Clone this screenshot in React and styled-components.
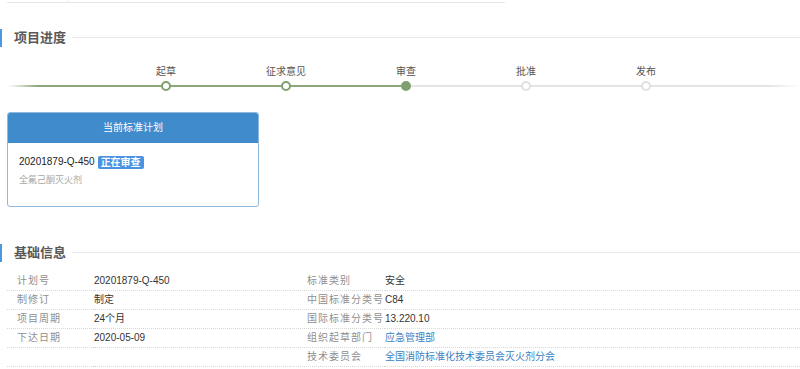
import React from 'react';
import styled, { createGlobalStyle } from 'styled-components';

const GlobalStyle = createGlobalStyle`
  body {
    margin: 0;
    background: #fff;
    font-family: "Liberation Sans", "Noto Sans CJK SC", sans-serif;
  }
`;

const steps = [
  { name: '起草', state: 'done' },
  { name: '征求意见', state: 'done' },
  { name: '审查', state: 'current' },
  { name: '批准', state: 'todo' },
  { name: '发布', state: 'todo' },
];

const leftRows = [
  ['计划号', '20201879-Q-450'],
  ['制修订', '制定'],
  ['项目周期', '24个月'],
  ['下达日期', '2020-05-09'],
  ['', ''],
];

const rightRows = [
  ['标准类别', '安全', false],
  ['中国标准分类号', 'C84', false],
  ['国际标准分类号', '13.220.10', false],
  ['组织起草部门', '应急管理部', true],
  ['技术委员会', '全国消防标准化技术委员会灭火剂分会', true],
];

const App = () => {
  return (
    <Page>
      <GlobalStyle />
      <TopRule>
        <TopCell $w={60} />
        <TopCell />
      </TopRule>

      <SectionHead $top={26}>
        <SectionTitle>项目进度</SectionTitle>
        <SectionLine />
      </SectionHead>

      <Progress>
        {steps.map((s) => (
          <Step key={s.name}>
            <StepLabel>{s.name}</StepLabel>
            <Node $state={s.state} />
          </Step>
        ))}
      </Progress>

      <PlanCard>
        <PlanHeader>当前标准计划</PlanHeader>
        <PlanBody>
          <PlanLine>
            20201879-Q-450
            <Badge>正在审查</Badge>
          </PlanLine>
          <PlanSub>全氟己酮灭火剂</PlanSub>
        </PlanBody>
      </PlanCard>

      <SectionHead $top={37}>
        <SectionTitle>基础信息</SectionTitle>
        <SectionLine />
      </SectionHead>

      <InfoGrid>
        {leftRows.map((row, i) => (
          <React.Fragment key={i}>
            <Label $pad={10}>{row[0]}</Label>
            <Value>{row[1]}</Value>
            <Label $pad={17}>{rightRows[i][0]}</Label>
            <Value $link={rightRows[i][2]}>{rightRows[i][1]}</Value>
          </React.Fragment>
        ))}
      </InfoGrid>
    </Page>
  );
};

export default App;

const Page = styled.div`
  width: 800px;
  height: 369px;
  overflow: hidden;
`;

const TopRule = styled.div`
  display: flex;
  width: 498px;
  height: 2px;
  margin-left: 7px;
  border-bottom: 1px solid #e6e6e6;
`;

const TopCell = styled.div`
  width: ${(p) => (p.$w ? `${p.$w}px` : 'auto')};
  flex: ${(p) => (p.$w ? 'none' : '1')};
  border-right: ${(p) => (p.$w ? '1px solid #ececec' : 'none')};
`;

const SectionHead = styled.div`
  display: flex;
  align-items: center;
  height: 18px;
  margin-top: ${(p) => p.$top}px;
  border-left: 2px solid #4b98de;
`;

const SectionTitle = styled.div`
  padding: 0 6px 0 12px;
  font-size: 13px;
  font-weight: bold;
  color: #595959;
  line-height: 18px;
`;

const SectionLine = styled.div`
  flex: 1;
  height: 1px;
  margin-top: -2px;
  background: #e8e8e8;
`;

const Progress = styled.div`
  position: relative;
  display: flex;
  padding-left: 106px;
  margin-top: 9px;
  height: 46px;

  &::before {
    content: '';
    position: absolute;
    left: 8px;
    right: 0;
    top: 29px;
    height: 2px;
    background: linear-gradient(
      to right,
      rgba(138, 168, 122, 0) 0px,
      #8aa87a 30px,
      #8aa87a 398px,
      #e4e4e4 398px,
      #e4e4e4 760px,
      rgba(228, 228, 228, 0) 792px
    );
  }
`;

const Step = styled.div`
  position: relative;
  width: 120px;
  display: flex;
  flex-direction: column;
  align-items: center;
`;

const StepLabel = styled.div`
  font-size: 10px;
  color: #555;
  line-height: 12px;
  margin-top: 10px;
`;

const Node = styled.div`
  width: 6px;
  height: 6px;
  margin-top: 3px;
  border-radius: 50%;
  border: 2px solid ${(p) => (p.$state === 'todo' ? '#e0e0e0' : '#7fa06e')};
  background: ${(p) => (p.$state === 'current' ? '#7fa06e' : '#fff')};
`;

const PlanCard = styled.div`
  width: 250px;
  height: 93px;
  margin: 10px 0 0 7px;
  border: 1px solid #8fb9df;
  border-radius: 3px;
  overflow: hidden;
`;

const PlanHeader = styled.div`
  height: 30px;
  background: #3f8bcb;
  color: #fff;
  font-size: 10px;
  line-height: 30px;
  text-align: center;
`;

const PlanBody = styled.div`
  padding: 12px 0 0 11px;
`;

const PlanLine = styled.div`
  display: flex;
  align-items: center;
  font-size: 10px;
  color: #222;
  line-height: 14px;
`;

const Badge = styled.span`
  margin-left: 3px;
  padding: 0 3px;
  height: 13px;
  line-height: 13px;
  background: #4a93e3;
  border-radius: 2px;
  color: #fff;
  font-size: 10px;
  font-weight: bold;
`;

const PlanSub = styled.div`
  margin-top: 4px;
  font-size: 9px;
  color: #a8a8a8;
`;

const InfoGrid = styled.div`
  display: grid;
  grid-template-columns: 87px 196px 95px 1fr;
  grid-auto-rows: 19px;
  margin: 10px 0 0 7px;
`;

const Label = styled.div`
  padding-left: ${(p) => p.$pad}px;
  font-size: 10px;
  letter-spacing: 1px;
  color: #8f8f8f;
  line-height: 18px;
  white-space: nowrap;
  border-bottom: 1px dotted #d8d8d8;
`;

const Value = styled.div`
  font-size: 10px;
  color: ${(p) => (p.$link ? '#3b82c4' : '#333')};
  line-height: 18px;
  white-space: nowrap;
  border-bottom: 1px dotted #d8d8d8;
`;
